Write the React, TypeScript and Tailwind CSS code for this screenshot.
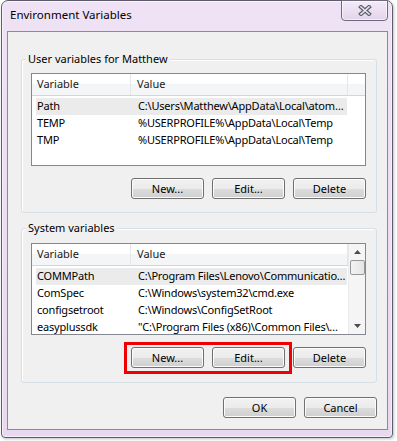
const font = { fontFamily: '"Segoe UI", "Noto Sans", sans-serif' }

const btn =
  'h-[21px] w-[73px] rounded-[3px] border border-[#707070] bg-[linear-gradient(to_bottom,#f2f2f2_0%,#ebebeb_50%,#dddddd_50%,#cfcfcf_100%)] shadow-[inset_0_0_0_1px_#fcfcfc] text-[11px] leading-none text-black flex items-center justify-center'

type Row = [string, string]

const userRows: Row[] = [
  ['Path', 'C:\\Users\\Matthew\\AppData\\Local\\atom…'],
  ['TEMP', '%USERPROFILE%\\AppData\\Local\\Temp'],
  ['TMP', '%USERPROFILE%\\AppData\\Local\\Temp'],
]

const sysRows: Row[] = [
  ['COMMPath', 'C:\\Program Files\\Lenovo\\Communicatio…'],
  ['ComSpec', 'C:\\Windows\\system32\\cmd.exe'],
  ['configsetroot', 'C:\\Windows\\ConfigSetRoot'],
  ['easyplussdk', '"C:\\Program Files (x86)\\Common Files\\…'],
]

function Header() {
  return (
    <div className="flex h-[22px] shrink-0 border-b border-[#d5d5d5] bg-[linear-gradient(to_bottom,#ffffff_0%,#ffffff_45%,#f4f5f6_46%,#f4f5f6_100%)] text-[11px] text-[#1a1a1a]">
      <div className="flex w-[99px] items-center border-r border-[#e3e6ea] pl-[5px]">Variable</div>
      <div className="flex w-[217px] items-center border-r border-[#e3e6ea] pl-[6px]">Value</div>
      <div className="flex-1" />
    </div>
  )
}

function Rows({ rows }: { rows: Row[] }) {
  return (
    <div className="pt-[2px]">
      {rows.map(([k, v], i) => (
        <div key={k} className={`ml-[4px] flex h-[17px] w-[311px] items-center text-[11px] tracking-[-0.2px] text-black ${i === 0 ? 'bg-[#ebebeb]' : ''}`}>
          <span className="w-[101px] shrink-0 overflow-hidden whitespace-nowrap pl-[1px]">{k}</span>
          <span className="whitespace-nowrap pl-[1px]">{v}</span>
        </div>
      ))}
    </div>
  )
}

function Buttons() {
  return (
    <div className="flex justify-end gap-[8px]">
      <div className={btn}>New...</div>
      <div className={btn}>Edit...</div>
      <div className={btn}>Delete</div>
    </div>
  )
}

function Group({ label, children }: { label: string; children: React.ReactNode }) {
  return (
    <div className="relative ml-[13px] w-[356px] rounded-[3px] border border-[#d5dfe5] shadow-[inset_1px_1px_0_#ffffff]">
      <span className="absolute left-[4px] top-[-9px] bg-[#f0f0f0] px-[2px] text-[11px] leading-[16px] text-black">{label}</span>
      <div className="pl-[9px] pr-[10px]">{children}</div>
    </div>
  )
}

export default function App() {
  return (
    <div className="h-[441px] w-[397px] overflow-hidden bg-white pl-[1px]" style={font}>
      <div className="flex h-[438px] w-[392px] flex-col rounded-t-[7px] rounded-b-[4px] border border-[#5e5c6c] bg-[linear-gradient(to_bottom,#efe2f5_0%,#e9d9f0_100%)] shadow-[inset_0_0_0_1px_rgba(255,255,255,0.55),1px_1px_3px_rgba(0,0,0,0.25)]">
        {/* title bar */}
        <div className="flex h-[30px] shrink-0 items-start justify-between">
          <span className="pl-[8px] pt-[6px] text-[11.5px] leading-[16px] text-black">Environment Variables</span>
          <div className="-mt-px mr-[4px] flex h-[21px] w-[47px] items-center justify-center rounded-b-[4px] border border-[#6f6a7c] bg-[linear-gradient(to_bottom,#f4ebf8_0%,#ecdff2_50%,#e4d3ec_100%)] shadow-[inset_0_0_0_1px_rgba(255,255,255,0.6)]">
            <svg width="14" height="11" viewBox="0 0 14 11">
              <path d="M3 2 L11 9 M11 2 L3 9" stroke="#5f5f6e" strokeWidth="4" strokeLinecap="square" fill="none" />
              <path d="M3 2 L11 9 M11 2 L3 9" stroke="#e4e4ea" strokeWidth="1.6" strokeLinecap="square" fill="none" />
            </svg>
          </div>
        </div>

        {/* client area */}
        <div className="ml-[5px] h-[399px] w-[381px] border border-[#8a8a98] bg-[#f0f0f0]">
          <div className="mt-[27px]">
            <Group label="User variables for Matthew">
              <div className="mt-[13px] flex h-[93px] w-[335px] flex-col overflow-hidden border border-[#828790] bg-white">
                <Header />
                <Rows rows={userRows} />
              </div>
              <div className="mb-[13px] mt-[12px]">
                <Buttons />
              </div>
            </Group>
          </div>

          <div className="mt-[15px]">
            <Group label="System variables">
              <div className="mt-[14px] flex h-[92px] w-[335px] overflow-hidden border border-[#828790] bg-white">
                <div className="flex w-[316px] flex-col">
                  <Header />
                  <Rows rows={sysRows} />
                </div>
                <div className="flex w-[17px] flex-col items-center border-l border-[#eaeaea] bg-[#f5f5f5]">
                  <div className="flex h-[16px] w-full items-center justify-center">
                    <svg width="7" height="4" viewBox="0 0 7 4"><path d="M0 4 L3.5 0 L7 4 Z" fill="#4d4d4d" /></svg>
                  </div>
                  <div className="h-[15px] w-[15px] rounded-[2px] border border-[#979797] bg-[linear-gradient(to_right,#f3f3f3,#e4e4e4)]" />
                  <div className="flex-1" />
                  <div className="flex h-[16px] w-full items-center justify-center">
                    <svg width="7" height="4" viewBox="0 0 7 4"><path d="M0 0 L7 0 L3.5 4 Z" fill="#4d4d4d" /></svg>
                  </div>
                </div>
              </div>
              <div className="relative mb-[14px] mt-[12px]">
                <Buttons />
                {/* red highlight annotation */}
                <div className="pointer-events-none absolute left-[93px] top-[-5px] h-[32px] w-[168px] border-[3px] border-[#f00000]" />
              </div>
            </Group>
          </div>

          <div className="ml-[13px] mt-[14px] flex w-[356px] justify-end gap-[8px]">
            <div className={btn}>OK</div>
            <div className={btn}>Cancel</div>
          </div>
        </div>
      </div>
    </div>
  )
}
